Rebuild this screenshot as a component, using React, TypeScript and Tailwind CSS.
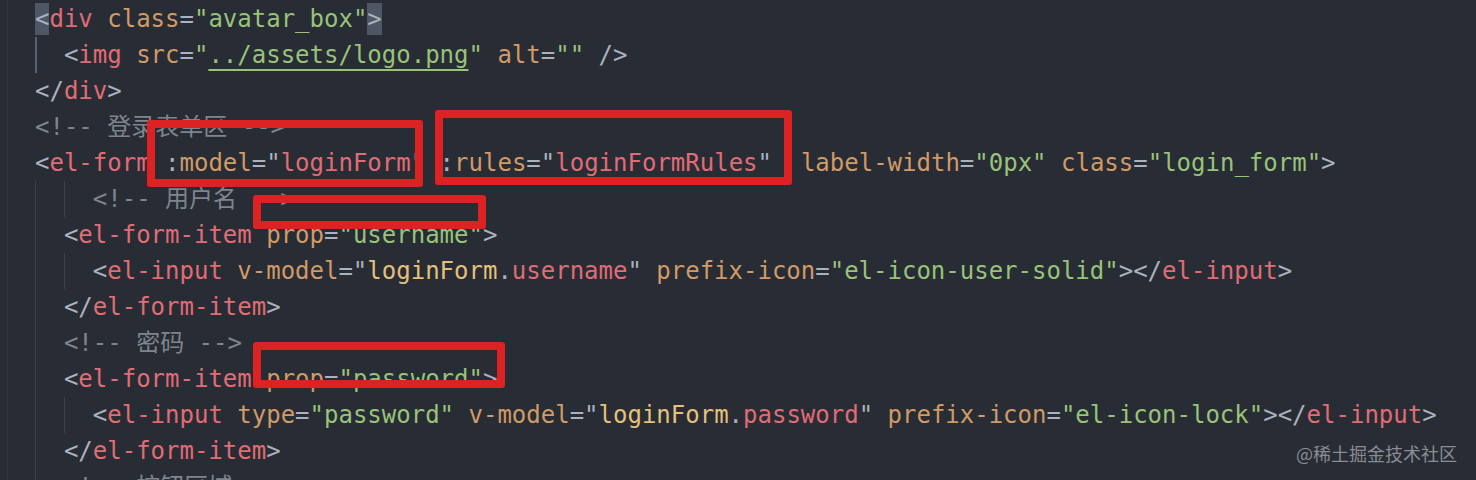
import React from 'react';

type Kind = 'p' | 'tag' | 'attr' | 'str' | 'cm' | 'obj' | 'hl' | 'link';
type Tok = [Kind, string];

const kindClass: Record<Kind, string> = {
  p: 'text-[#abb2bf]',
  tag: 'text-[#e06c75]',
  attr: 'text-[#d19a66]',
  str: 'text-[#98c379]',
  cm: 'text-[#7f848e]',
  obj: 'text-[#e5c07b]',
  hl: 'inline-block h-[32px] bg-[#4f5666] leading-[32px] text-[#abb2bf]',
  link: 'text-[#98c379] underline decoration-2 underline-offset-[6px]',
};

const lines: { indent: number; active?: boolean; toks: Tok[] }[] = [
  {
    indent: 0,
    toks: [['hl', '<'], ['tag', 'div'], ['attr', ' class'], ['p', '='], ['str', '"avatar_box"'], ['hl', '>']],
  },
  {
    indent: 1,
    active: true,
    toks: [
      ['p', '<'], ['tag', 'img'], ['attr', ' src'], ['p', '='], ['str', '"'], ['link', '../assets/logo.png'],
      ['str', '"'], ['attr', ' alt'], ['p', '='], ['str', '""'], ['p', ' />'],
    ],
  },
  { indent: 0, toks: [['p', '</'], ['tag', 'div'], ['p', '>']] },
  { indent: 0, toks: [['cm', '<!-- 登录表单区 -->']] },
  {
    indent: 0,
    toks: [
      ['p', '<'], ['tag', 'el-form'], ['p', ' :'], ['attr', 'model'], ['p', '="'], ['tag', 'loginForm'], ['p', '"'],
      ['p', ' :'], ['attr', 'rules'], ['p', '="'], ['tag', 'loginFormRules'], ['p', '"'],
      ['attr', '  label-width'], ['p', '='], ['str', '"0px"'], ['attr', ' class'], ['p', '='], ['str', '"login_form"'], ['p', '>'],
    ],
  },
  { indent: 2, toks: [['cm', '<!-- 用户名 -->']] },
  {
    indent: 1,
    toks: [['p', '<'], ['tag', 'el-form-item'], ['attr', ' prop'], ['p', '='], ['str', '"username"'], ['p', '>']],
  },
  {
    indent: 2,
    toks: [
      ['p', '<'], ['tag', 'el-input'], ['attr', ' v-model'], ['p', '="'], ['obj', 'loginForm'], ['p', '.'], ['tag', 'username'], ['p', '"'],
      ['attr', ' prefix-icon'], ['p', '='], ['str', '"el-icon-user-solid"'], ['p', '></'], ['tag', 'el-input'], ['p', '>'],
    ],
  },
  { indent: 1, toks: [['p', '</'], ['tag', 'el-form-item'], ['p', '>']] },
  { indent: 1, toks: [['cm', '<!-- 密码 -->']] },
  {
    indent: 1,
    toks: [['p', '<'], ['tag', 'el-form-item'], ['attr', ' prop'], ['p', '='], ['str', '"password"'], ['p', '>']],
  },
  {
    indent: 2,
    toks: [
      ['p', '<'], ['tag', 'el-input'], ['attr', ' type'], ['p', '='], ['str', '"password"'],
      ['attr', ' v-model'], ['p', '="'], ['obj', 'loginForm'], ['p', '.'], ['tag', 'password'], ['p', '"'],
      ['attr', ' prefix-icon'], ['p', '='], ['str', '"el-icon-lock"'], ['p', '></'], ['tag', 'el-input'], ['p', '>'],
    ],
  },
  { indent: 1, toks: [['p', '</'], ['tag', 'el-form-item'], ['p', '>']] },
  { indent: 1, toks: [['cm', '<!-- 按钮区域 -->']] },
];

// red annotation boxes drawn on top of the code
const boxes = [
  'left-[147px] top-[120px] w-[276px] h-[67px]',
  'left-[435px] top-[110px] w-[357px] h-[75px]',
  'left-[253px] top-[195px] w-[233px] h-[34px]',
  'left-[253px] top-[342px] w-[252px] h-[46px]',
];

const App = () => {
  return (
    <div className="relative h-[480px] w-[1476px] overflow-hidden bg-[#282c34]">
      <div className="ml-[7px] h-full border-l border-[#30343c] pl-[27px] pt-px font-['DejaVu_Sans_Mono','Noto_Sans_CJK_SC',monospace] text-[24px]">
        {lines.map((line, i) => (
          <div key={i} className="flex h-9 items-center whitespace-pre leading-9">
            {Array.from({ length: line.indent }).map((_, k) => (
              <span
                key={k}
                className={`h-9 w-[2ch] shrink-0 ${
                  line.active ? 'border-l-2 border-[#596072]' : 'border-l border-[#3b4049]'
                }`}
              />
            ))}
            <span>
              {line.toks.map(([kind, text], j) => (
                <span key={j} className={kindClass[kind]}>
                  {text}
                </span>
              ))}
            </span>
          </div>
        ))}
      </div>

      {boxes.map((b, i) => (
        <div key={i} className={`absolute rounded-[3px] border-[8px] border-[#dc2222] ${b}`} />
      ))}

      <div className="absolute right-[19px] top-[440px] font-['Noto_Sans_CJK_SC',sans-serif] text-[18px] leading-[26px] text-[#8a8d93]">
        @稀土掘金技术社区
      </div>
    </div>
  );
};

export default App;
